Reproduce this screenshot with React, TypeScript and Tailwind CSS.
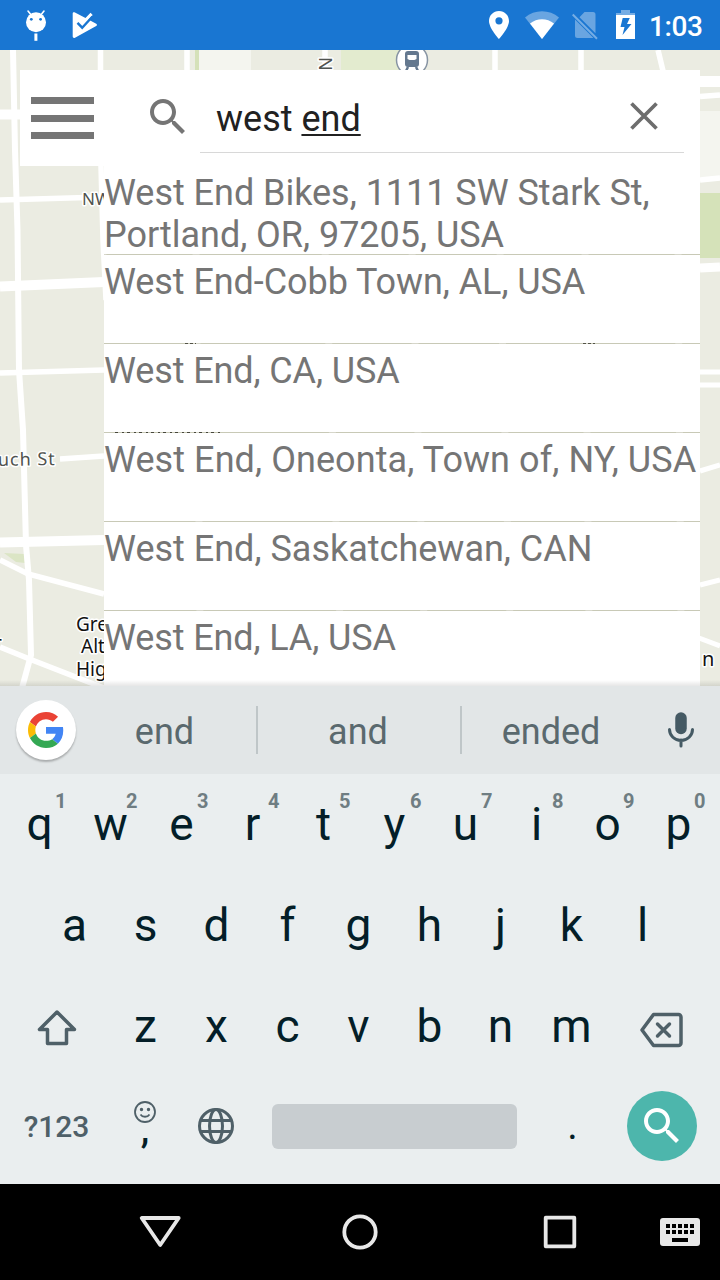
import React from "react";

const results = [
  { text: "West End Bikes, 1111 SW Stark St, Portland, OR, 97205, USA", tracking: "tracking-[-0.030px]" },
  { text: "West End-Cobb Town, AL, USA", tracking: "tracking-[-0.075px]" },
  { text: "West End, CA, USA", tracking: "tracking-[-0.120px]" },
  { text: "West End, Oneonta, Town of, NY, USA", tracking: "tracking-[0.070px]" },
  { text: "West End, Saskatchewan, CAN", tracking: "tracking-normal" },
  { text: "West End, LA, USA", tracking: "tracking-[-0.120px]" },
];

const SEARCH_PATH =
  "M15.5 14h-.79l-.28-.27C15.41 12.59 16 11.11 16 9.5 16 5.91 13.09 3 9.5 3S3 5.91 3 9.5 5.91 16 9.5 16c1.61 0 3.09-.59 4.23-1.57l.27.28v.79l5 4.99L20.49 19l-4.99-5zm-6 0C7.01 14 5 11.99 5 9.5S7.01 5 9.5 5 14 7.01 14 9.5 11.99 14 9.5 14z";

function StatusBar() {
  return (
    <header className="h-[50px] shrink-0 bg-[#1976d2]">
      <svg width="720" height="50" viewBox="0 0 720 50" fill="#fff">
        <circle cx="36" cy="22.3" r="10" />
        <path d="M28 11l4 5M44 11l-4 5" stroke="#fff" strokeWidth="1.6" strokeLinecap="round" />
        <circle cx="31.3" cy="19.3" r="1.4" fill="#1976d2" />
        <circle cx="40.6" cy="19.3" r="1.4" fill="#1976d2" />
        <rect x="34.4" y="33.5" width="3" height="7.3" />
        <path d="M74.500 12.300L85.500 18l5-5.300 2.200 2.300-4.500 5 2 .5 6 3.200c1 .7 1 1.600 0 2.200L75 37.700c-1.400.6-2.300-.2-2.300-1.400V13.500c0-1 .8-1.600 1.800-1.200z" />
        <path d="M77.500 22.800l4.700 4.900L92.500 16.500" fill="none" stroke="#1976d2" strokeWidth="2.400" />
        <path d="M499 11c-5.700 0-10 4.400-10 10 0 7.300 10 18 10 18s10-10.700 10-18c0-5.600-4.300-10-10-10zm0 6.200a3.600 3.600 0 1 1 0 7.200 3.600 3.600 0 0 1 0-7.200z" />
        <path d="M525 17.500a26 26 0 0 1 34 0L542 39z" opacity=".35" />
        <path d="M530 23.600c7-5.700 17-5.700 24 0L542 39z" />
        <path d="M584.500 12H593a2.500 2.500 0 0 1 2.500 2.500v18.800L579.500 17.300zM575 19.500l18.500 18.500H577.500a2.500 2.500 0 0 1-2.500-2.500z" opacity=".35" />
        <path d="M572.700 14.500L597 38.800" stroke="#fff" strokeWidth="2" opacity=".4" />
        <path d="M621 10h9v3h5v2h-19v-2h5z" opacity=".4" />
        <path d="M616 15h19v24h-19zm6.700 3l-2.200 9h4l-2 8 9-11h-4.500l2.800-6z" fillRule="evenodd" />
        <text x="649" y="36" fontFamily="Roboto, sans-serif" fontSize="28" fontWeight="500" textLength="54">1:03</text>
      </svg>
    </header>
  );
}

function CityMap() {
  return (
    <svg className="absolute inset-0" width="720" height="636" viewBox="0 50 720 636">
      <rect y="50" width="720" height="636" fill="#ebece2" />
      <rect x="199" y="50" width="52" height="20" fill="#f4f5ef" />
      <rect x="195" y="50" width="4" height="20" fill="#d5e1b9" />
      <rect x="341" y="50" width="60" height="20" fill="#e3ebcf" />
      <rect x="700" y="111" width="20" height="66" fill="#f4f5ef" />
      <rect x="700" y="193" width="20" height="65" fill="#d5e2b9" />
      <path d="M4 553L24 554L25 563L16 562z" fill="#dbe5c5" />
      <g fill="none" stroke="#fff">
        <path d="M13 50L15 150L17.500 230L19 370L23 430L26 545L29 580L31 655L22 688" strokeWidth="6" />
        <path d="M101 166L103 240L106 300M100.500 50V70M187 50V70M495 50V70M581 50V70M658 50L664 75M325 50V70" strokeWidth="5.500" />
        <path d="M0 200L104 197M0 373L104 370M60 459L104 456" strokeWidth="5.500" />
        <path d="M0 114.500H22" strokeWidth="10" />
        <path d="M0 286.500L104 282M0 542.500L104 540" strokeWidth="10" />
        <path d="M0 560L28 574L104 594M0 647L32 660L104 688" strokeWidth="5.500" />
        <path d="M700 81.500H720" strokeWidth="11" />
        <path d="M700 96.500L720 95M700 180L720 178" strokeWidth="5.500" />
        <path d="M700 268L720 267" strokeWidth="9" />
        <path d="M699 372H720M699 385H720M700 471L720 465M700 585L720 580M699 638L720 646" strokeWidth="5" />
        <path d="M196 250L200 620M325 250L340 620M412 250L424 620M500 250L510 620M585 250L589 620M678 250L681 620" strokeWidth="7" />
      </g>
      <path d="M185 343.500h11M583 343.500h12" stroke="#444" strokeDasharray="3 2" />
      <path d="M115 432.500h107" stroke="#333" strokeDasharray="3 4 2 3" />
      <g transform="translate(412 60)">
        <circle r="15.500" fill="#fff" stroke="#8794a3" strokeWidth="1.500" />
        <rect x="-7" y="-9" width="14" height="16" rx="3" fill="#64788f" />
        <path d="M-4.500 -5h9v4l-2 1h-5l-2-1z" fill="#fff" />
        <path d="M-4 7l-2 4M4 7l2 4" stroke="#64788f" strokeWidth="2.500" />
      </g>
      <g fontFamily="Noto Sans, sans-serif" fontSize="18" fill="#50534f" stroke="#fff" strokeWidth="3" paintOrder="stroke" strokeLinejoin="round">
        <text transform="translate(319 57) rotate(90)">N</text>
        <text x="82" y="205" fontSize="17">NW</text>
        <text x="-14" y="466" letterSpacing="1" transform="rotate(-1 0 466)">ouch St</text>
        <g fill="#111" fontSize="19">
          <text x="76" y="631">Gre</text>
          <text x="81" y="653">Alt</text>
          <text x="76" y="676">Hig</text>
          <text x="702" y="666" fontSize="20">n</text>
          <text x="-6" y="650">r</text>
        </g>
      </g>
    </svg>
  );
}

function MapArea() {
  return (
    <main className="relative h-[636px] shrink-0 overflow-hidden">
      <CityMap />
      <div className="relative px-5 pt-5">
        <div className="flex h-24 bg-white">
          <button className="flex w-[84px] flex-col gap-[10.500px] pl-[10.500px] pt-[27px]" aria-label="Menu">
            <span className="h-[7px] w-[63px] bg-[#757575]" />
            <span className="h-[7px] w-[63px] bg-[#757575]" />
            <span className="h-[7px] w-[63px] bg-[#757575]" />
          </button>
          <div className="flex w-24 justify-center pt-[23px] pl-[32px]">
            <svg width="48" height="48" viewBox="0 0 24 24" fill="#757575"><path d={SEARCH_PATH} /></svg>
          </div>
          <div className="mr-4 flex h-[83px] flex-1 justify-between border-b border-[#d8d8d8] pl-4">
            <div className="pt-[28px] font-[Roboto] text-[36px] leading-[42px] whitespace-pre text-[#212121]">
              west <span className="underline decoration-2 underline-offset-[3px]">end</span>
            </div>
            <svg className="mt-[22px] mr-4" width="48" height="48" viewBox="0 0 48 48" stroke="#6d6d6d" strokeWidth="3.700"><path d="M11.500 11.500l25 25M36.500 11.500l-25 25" /></svg>
          </div>
        </div>
        <ul className="ml-[84px] font-[Roboto] text-[36px] leading-[42px] text-[#757575]">
          {results.map((r) => (
            <li key={r.text} className={`h-[89px] border-b border-[#787850]/30 bg-white bg-clip-padding pt-[6px] ${r.tracking}`}>
              {r.text}
            </li>
          ))}
        </ul>
      </div>
      <div className="absolute inset-x-0 bottom-0 h-1.5 bg-linear-to-t from-black/10 to-transparent" />
    </main>
  );
}

function GoogleLogo() {
  return (
    <svg width="36" height="36" viewBox="0 0 48 48">
      <path fill="#EA4335" d="M24 9.500c3.540 0 6.710 1.220 9.210 3.600l6.850-6.850C35.900 2.380 30.470 0 24 0 14.620 0 6.510 5.380 2.560 13.220l7.980 6.190C12.430 13.720 17.740 9.500 24 9.500z" />
      <path fill="#4285F4" d="M46.980 24.550c0-1.570-.15-3.090-.38-4.550H24v9.020h12.940c-.58 2.960-2.260 5.480-4.780 7.180l7.730 6c4.510-4.180 7.090-10.360 7.090-17.650z" />
      <path fill="#FBBC05" d="M10.530 28.590c-.48-1.450-.76-2.990-.76-4.590s.27-3.140.76-4.590l-7.980-6.190C.92 16.460 0 20.120 0 24c0 3.880.92 7.540 2.560 10.780l7.970-6.190z" />
      <path fill="#34A853" d="M24 48c6.480 0 11.930-2.130 15.890-5.810l-7.730-6c-2.150 1.450-4.920 2.300-8.160 2.300-6.260 0-11.570-4.220-13.470-9.910l-7.980 6.190C6.510 42.620 14.620 48 24 48z" />
    </svg>
  );
}

function Suggestions() {
  return (
    <div className="flex h-[88px] items-center bg-[#e2e6e7] font-[Roboto] text-[36px] text-[#5a696e]">
      <div className="ml-4 flex size-[60px] items-center justify-center rounded-full bg-white shadow-[0_2px_2px_rgba(0,0,0,0.250)]">
        <GoogleLogo />
      </div>
      <div className="w-[180px] pt-[4px] pr-[3px] text-center">end</div>
      <div className="h-12 w-[2px] bg-[#bfc6c8]" />
      <div className="w-[202px] pt-[4px] pr-[2px] text-center">and</div>
      <div className="h-12 w-[2px] bg-[#bfc6c8]" />
      <div className="w-[179px] pt-[4px] pr-px text-center">ended</div>
      <svg className="ml-[16px]" width="48" height="48" viewBox="0 0 48 48" fill="none" stroke="#455a64">
        <path d="M24 12v10.500" strokeWidth="11.500" strokeLinecap="round" />
        <path d="M12.500 23.500a11.500 11 0 0 0 23 0M24 34v6" strokeWidth="3" strokeLinecap="round" />
      </svg>
    </div>
  );
}

function Key({ label, hint }: { label: string; hint?: string }) {
  return (
    <button className="relative flex w-[71px] justify-center text-[#041e28]">
      {label}
      {hint && <span className="absolute top-0 left-[51px] text-[20px] leading-6 font-bold text-[#6f7d82]">{hint}</span>}
    </button>
  );
}

function Keyboard() {
  return (
    <section className="flex h-[410px] shrink-0 flex-col bg-[#eaeeef] font-[Roboto] text-[46px] leading-[54px]">
      <div className="flex h-[101px] pt-[15px] pl-[4px] [&>button]:items-start [&>button]:pt-[8px]">
        {"qwertyuiop".split("").map((k, i) => (
          <Key key={k} label={k} hint={String((i + 1) % 10)} />
        ))}
      </div>
      <div className="flex h-[101px] justify-center pt-[23px] pr-[3px]">
        {"asdfghjkl".split("").map((k) => <Key key={k} label={k} />)}
      </div>
      <div className="flex h-[101px] pt-[23px]">
        <svg className="ml-[33px] mr-[29px]" width="48" height="60" viewBox="0 0 48 60" fill="none" stroke="#4f6068" strokeWidth="3.500" strokeLinejoin="round">
          <path d="M24 13L6.500 30.500H14.500V44.500H33.500V30.500H41.500z" />
        </svg>
        {"zxcvbnm".split("").map((k) => <Key key={k} label={k} />)}
        <svg className="ml-[32px]" width="48" height="60" viewBox="0 0 48 60" fill="none" stroke="#4f6068" strokeWidth="3.500" strokeLinejoin="round">
          <path d="M14.500 15.500H39.500a2.500 2.500 0 0 1 2.500 2.500v26a2.500 2.500 0 0 1-2.500 2.500H14.500L3 31z" />
          <path d="M18.500 25l12 12M30.500 25l-12 12" strokeLinecap="round" />
        </svg>
      </div>
      <div className="flex h-[107px] items-center pb-[9px]">
        <div className="w-[113px] pt-[2px] text-center text-[30px] leading-[40px] font-medium text-[#4f6068]">?123</div>
        <div className="flex w-[64px] flex-col items-center text-[#041e28]">
          <svg width="24" height="24" viewBox="0 0 24 24" fill="none" stroke="#4f6068" strokeWidth="1.800">
            <circle cx="12" cy="12" r="10" />
            <path d="M7.500 14.500c2 3 7 3 9 0" />
            <circle cx="8.500" cy="9.500" r=".8" /><circle cx="15.500" cy="9.500" r=".8" />
          </svg>
          <span className="h-[28px] text-[38px] leading-[10px] font-medium">,</span>
        </div>
        <svg className="ml-[15px]" width="48" height="48" viewBox="0 0 48 48" fill="none" stroke="#4f6068" strokeWidth="3">
          <circle cx="24" cy="24" r="16.500" /><ellipse cx="24" cy="24" rx="6.500" ry="16.500" />
          <path d="M9 18.500h30M9 29.500h30" />
        </svg>
        <div className="ml-[32px] h-[45px] w-[245px] rounded-[6px] bg-[#c8cdd0]" />
        <div className="w-[110px] pl-px text-center text-[40px] text-[#041e28]">.</div>
        <button className="flex size-[70px] items-center justify-center rounded-full bg-[#4db6ac]" aria-label="Search">
          <svg width="48" height="48" viewBox="0 0 24 24" fill="#fff"><path d={SEARCH_PATH} /></svg>
        </button>
      </div>
    </section>
  );
}

function NavigationBar() {
  return (
    <nav className="h-24 shrink-0 bg-black">
      <svg width="720" height="96" viewBox="0 0 720 96" fill="none" stroke="#e8e8e8" strokeWidth="3.800" strokeLinejoin="round">
        <path d="M141.700 34H178.700L160.200 61z" />
        <circle cx="360" cy="48" r="15.700" />
        <rect x="545.700" y="33.700" width="28.600" height="28.600" />
        <rect x="660" y="34" width="40" height="28" rx="3" fill="#e8e8e8" stroke="none" />
        <path d="M666 42h28M666 48h28" stroke="#000" strokeWidth="4" strokeDasharray="4 2" />
        <path d="M672 56h16" stroke="#000" strokeWidth="4" />
      </svg>
    </nav>
  );
}

export default function App() {
  return (
    <div className="flex h-[1280px] w-[720px] flex-col overflow-hidden">
      <StatusBar />
      <MapArea />
      <Suggestions />
      <Keyboard />
      <NavigationBar />
    </div>
  );
}
